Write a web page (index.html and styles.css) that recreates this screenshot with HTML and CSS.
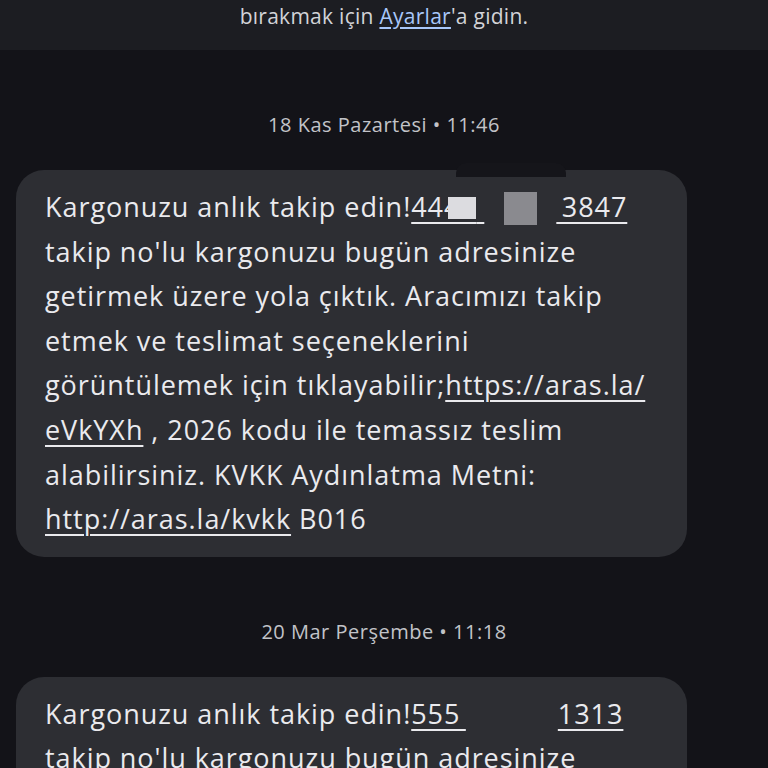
FILE: index.html
```html
<!DOCTYPE html>
<html lang="tr">
<head>
  <meta charset="UTF-8" />
  <meta name="viewport" content="width=device-width, initial-scale=1.0"/>
  <title>Mesajlar</title>
  <link rel="stylesheet" href="styles.css">
</head>
<body>
  <div class="banner">
    bırakmak için <a class="banner-link" href="#">Ayarlar</a>'a gidin.
  </div>

  <div class="thread">
    <div class="stamp">18 Kas Pazartesi • 11:46</div>
    <div class="bubble">
      <span class="cover"></span>
      <p class="msg">
        Kargonuzu anlık takip edin!<a class="link" href="#">444<span class="smudge">&nbsp;&nbsp;&nbsp;</span>&nbsp;</a><span class="block"></span><a class="link" href="#">&thinsp;3847</a><br>
        takip no'lu kargonuzu bugün adresinize<br>
        getirmek üzere yola çıktık. Aracımızı takip<br>
        etmek ve teslimat seçeneklerini<br>
        görüntülemek için tıklayabilir;<a class="link" href="#">https://aras.la/</a><br>
        <a class="link" href="#">eVkYXh</a> , 2026 kodu ile temassız teslim<br>
        alabilirsiniz. KVKK Aydınlatma Metni:<br>
        <a class="link" href="#">http://aras.la/kvkk</a> B016
      </p>
    </div>

    <div class="stamp">20 Mar Perşembe • 11:18</div>
    <div class="bubble">
      <p class="msg">
        Kargonuzu anlık takip edin!<a class="link" href="#">555&thinsp;</a><span class="gap"></span><a class="link" href="#">1313</a><br>
        takip no'lu kargonuzu bugün adresinize<br>
        getirmek üzere yola çıktık. Aracımızı takip
      </p>
    </div>
  </div>
</body>
</html>
```

FILE: styles.css
```css
html, body {
  margin: 0;
  padding: 0;
  background-color: #131318;
  font-family: "Open Sans", Roboto, sans-serif;
  overflow: hidden;
}

.banner {
  height: 50px;
  box-sizing: border-box;
  padding-top: 4px;
  background-color: #1c1d22;
  color: #d2d3d8;
  font-size: 21px;
  line-height: 24px;
  letter-spacing: 0.27px;
  text-align: center;
}

.banner-link {
  color: #a8c7fa;
  text-decoration: underline;
  text-underline-offset: 3px;
}

.thread {
  display: flex;
  flex-direction: column;
}

.stamp {
  padding: 63px 0 33px;
  color: #c2c3c8;
  font-size: 20px;
  line-height: 24px;
  letter-spacing: 0.5px;
  text-align: center;
}

.bubble {
  position: relative;
  margin-left: 16px;
  width: 671px;
  box-sizing: border-box;
  padding: 15px 29px;
  border-radius: 28px;
  background-color: #2d2e33;
}

.msg {
  margin: 0;
  color: #eaeaee;
  font-size: 27px;
  line-height: 44.6px;
  letter-spacing: 0.95px;
  white-space: nowrap;
}

.link {
  color: #eaeaee;
  text-decoration: underline;
  text-decoration-thickness: 2px;
  text-underline-offset: 5px;
}

/* redacted tracking number pieces */
.smudge {
  margin-left: -12px;
  letter-spacing: 2.3px;
  background: linear-gradient(#dcdce0, #dcdce0) no-repeat 0 9px / 100% 22px;
}

.block {
  display: inline-block;
  width: 33px;
  height: 33px;
  margin: 0 19px 0 20px;
  background-color: #8a8a8f;
  vertical-align: -8px;
}

.gap {
  display: inline-block;
  width: 92px;
}

/* dark strip over the top edge of the first bubble */
.cover {
  position: absolute;
  left: 440px;
  top: -7px;
  width: 110px;
  height: 14px;
  background-color: #15151a;
  border-radius: 10px 10px 0 0;
}
```
